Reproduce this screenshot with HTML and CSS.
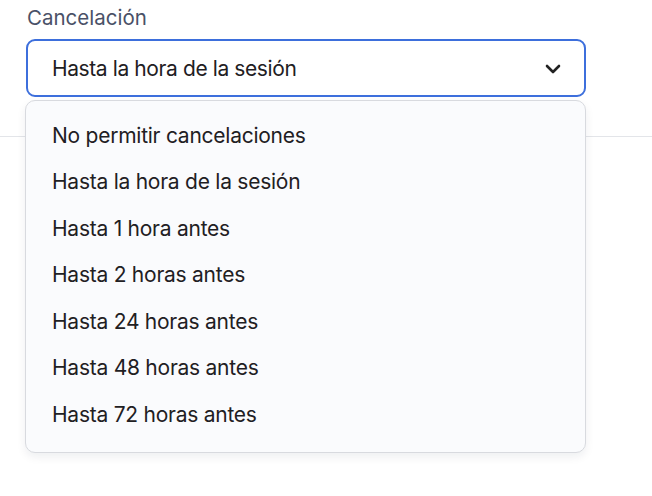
FILE: index.html
```html
<!DOCTYPE html>
<html lang="es">
<head>
<meta charset="utf-8">
<title>Cancelación</title>
<link rel="stylesheet" href="styles.css">
</head>
<body>
<div class="page">
  <div class="field">
    <label class="label">Cancelación</label>
    <div class="select">
      <span class="select-value">Hasta la hora de la sesión</span>
      <svg class="chevron" width="16" height="10" viewBox="0 0 16 10"><path d="M2 2 L8 8 L14 2" fill="none" stroke="#222" stroke-width="2.6" stroke-linecap="round" stroke-linejoin="round"/></svg>
    </div>
    <ul class="menu">
      <li class="option">No permitir cancelaciones</li>
      <li class="option">Hasta la hora de la sesión</li>
      <li class="option">Hasta 1 hora antes</li>
      <li class="option">Hasta 2 horas antes</li>
      <li class="option">Hasta 24 horas antes</li>
      <li class="option">Hasta 48 horas antes</li>
      <li class="option">Hasta 72 horas antes</li>
    </ul>
  </div>
  <div class="divider"></div>
</div>
</body>
</html>
```

FILE: styles.css
```css
* { box-sizing: border-box; }
html, body { margin: 0; padding: 0; background: #ffffff; }
body {
  font-family: Inter, "Noto Sans", sans-serif;
  color: #222326;
  width: 652px;
  height: 496px;
  overflow: hidden;
}
.page { position: relative; }
.field {
  position: relative;
  padding: 5px 66px 0 26px;
}
.label {
  display: block;
  font-size: 20.5px;
  line-height: 26px;
  color: #4a5167;
  padding-left: 1px;
  letter-spacing: 0;
  margin-bottom: 8px;
}
.select {
  height: 58px;
  border: 2px solid #3d6fdc;
  border-radius: 9px;
  display: flex;
  align-items: center;
  justify-content: space-between;
  padding: 0 23px 0 24px;
}
.select-value {
  font-size: 21px;
  letter-spacing: -0.4px;
  color: #1f2023;
}
.chevron { display: block; margin-top: 1px; }
.divider {
  margin-top: 39px;
  border-top: 1px solid #e3e5e9;
}
.menu {
  position: absolute;
  top: 100px;
  left: 25px;
  width: 561px;
  height: 353px;
  margin: 0;
  padding: 11px 0 0 0;
  list-style: none;
  background: #fafbfd;
  border: 1px solid #d8dadf;
  border-radius: 10px;
  box-shadow: 0 4px 10px rgba(20, 30, 50, 0.07);
}
.option {
  height: 46.5px;
  display: flex;
  align-items: center;
  padding-left: 26px;
  font-size: 21px;
  letter-spacing: -0.25px;
  color: #1f2023;
}
```
